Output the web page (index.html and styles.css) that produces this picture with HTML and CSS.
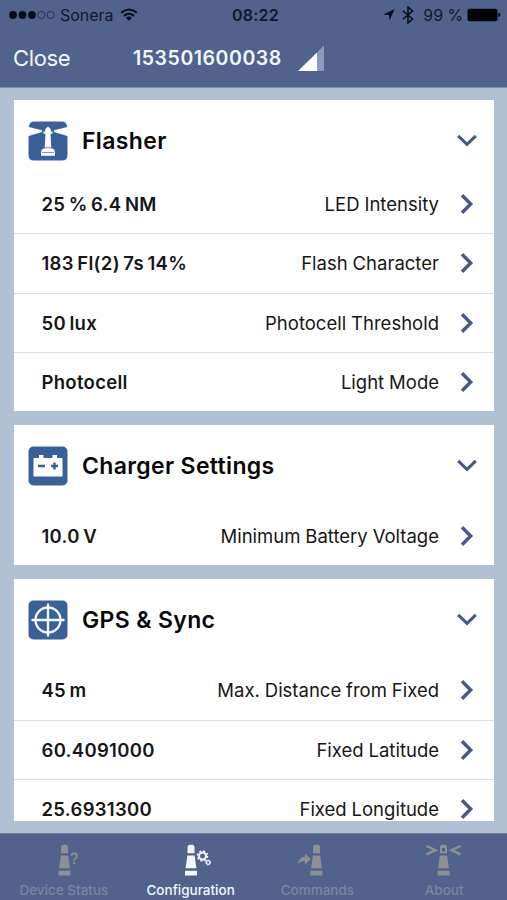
FILE: index.html
```html
<!DOCTYPE html>
<html lang="en">
<head>
<meta charset="utf-8">
<title>Configuration</title>
<link rel="stylesheet" href="styles.css">
</head>
<body>
<svg class="defs" aria-hidden="true">
  <symbol id="right" viewBox="0 0 14 20"><path d="M2 1.300 10.700 10 2 18.700" fill="none" stroke="currentColor" stroke-width="3.400"/></symbol>
  <symbol id="down" viewBox="0 0 20 13"><path d="M1.200 1.800 10 10.300 18.800 1.800" fill="none" stroke="currentColor" stroke-width="3"/></symbol>
  <symbol id="tower" viewBox="0 0 13 32"><path d="M3 9.300V3.600Q3.200.8 5.500.8H7.500Q9.800.8 10 3.600V9.300ZM2.900 11.500H10.100L11.900 24.300H1.100ZM.5 26.700H12.500V31.600H.5Z" fill="currentColor"/></symbol>
</svg>
<header class="top">
  <div class="status">
    <div class="status-left">
      <svg width="48" height="10" viewBox="0 0 48 10"><g fill="#060b1c"><circle cx="5" cy="5" r="3.900"/><circle cx="14.500" cy="5" r="3.900"/><circle cx="24" cy="5" r="3.900"/></g><g fill="none" stroke="#1a2545" stroke-width=".8"><circle cx="33.300" cy="5" r="3.600"/><circle cx="42.700" cy="5" r="3.600"/></g></svg>
      <span class="carrier">Sonera</span>
      <svg class="wifi" width="18" height="13" viewBox="0 0 18 13"><g fill="none" stroke="#060b1c" stroke-width="2"><path d="M1.200 4.800Q9-1.900 16.800 4.800"/><path d="M4 8Q9 3.600 14 8"/></g><path d="M6 9.800Q9 7.200 12 9.800L9 12.700Z" fill="#060b1c"/></svg>
    </div>
    <span class="clock">08:22</span>
    <div class="status-right">
      <svg width="12" height="12" viewBox="0 0 12 12"><path d="M11.500.3 6.500 11.600 6 6 .3 5.600Z" fill="#060b1c"/></svg>
      <svg class="bt" width="12" height="18" viewBox="0 0 12 18"><path d="M1 4.800 10.500 13 6 17V1L10.500 5 1 13.200" fill="none" stroke="#060b1c" stroke-width="1.500"/></svg>
      <span class="percent">99 %</span>
      <svg class="cell" width="34" height="14" viewBox="0 0 34 14"><rect x=".5" y=".8" width="30" height="12.400" rx="2" fill="#02040a"/><path d="M31.300 4.800Q33.500 5.200 33.500 7T31.300 9.200Z" fill="#060b1c"/></svg>
    </div>
  </div>
  <div class="nav">
    <span class="close">Close</span>
    <span class="serial">153501600038</span>
    <svg class="signal" width="27" height="26" viewBox="0 0 27 26"><path d="M0 26 19 7.400V26Z" fill="#fff"/><path d="M19 7.400 26 .5V26H19Z" fill="#8c9abb"/></svg>
  </div>
</header>
<main class="content">
  <section class="card flasher">
    <div class="head">
      <svg class="badge" viewBox="0 0 40 40"><path d="M.8 6Q1.500.5 6 .5H34Q38.500.5 39.200 6L26 9.300V11L39.500 15V34Q39.500 39.500 34 39.500H6Q.5 39.500.5 34V15L14 11V9.300Z" fill="#3a6099"/><path d="M20 5.500 22.800 8.300V10.500H24.500V12.800H22.500L23.300 26.500H16.700L17.500 12.800H15.500V10.500H17.200V8.300Z" fill="#fff"/><path d="M16 27.300H24Q27 28.500 27 31V34.800H13V31Q13 28.500 16 27.300Z" fill="#fff"/><path d="M14 31.500H26" stroke="#3a6099" stroke-width=".7"/></svg>
      <h2>Flasher</h2><svg class="down"><use href="#down"/></svg>
    </div>
    <div class="row"><b>25 % 6.4 NM</b><span>LED Intensity</span><svg class="right"><use href="#right"/></svg></div>
    <div class="row"><b>183 Fl(2) 7s 14%</b><span>Flash Character</span><svg class="right"><use href="#right"/></svg></div>
    <div class="row"><b>50 lux</b><span>Photocell Threshold</span><svg class="right"><use href="#right"/></svg></div>
    <div class="row"><b>Photocell</b><span>Light Mode</span><svg class="right"><use href="#right"/></svg></div>
  </section>
  <section class="card">
    <div class="head">
      <svg class="badge" viewBox="0 0 40 40"><rect x=".5" y=".5" width="39" height="39" rx="5" fill="#3a6099"/><path d="M5.500 12H11V9H15.500V12H24.500V9H29V12H34.500V30.500H5.500Z" fill="#fff"/><path d="M10 20H17M23 20H30M26.500 16.500V23.500" stroke="#3a6099" stroke-width="2.400"/></svg>
      <h2>Charger Settings</h2><svg class="down"><use href="#down"/></svg>
    </div>
    <div class="row"><b>10.0 V</b><span>Minimum Battery Voltage</span><svg class="right"><use href="#right"/></svg></div>
  </section>
  <section class="card">
    <div class="head">
      <svg class="badge" viewBox="0 0 40 40"><rect x=".5" y=".5" width="39" height="39" rx="5" fill="#3a6099"/><g fill="none" stroke="#f4f8ff" stroke-width="2.300"><circle cx="20" cy="20" r="12.500"/><path d="M20 3.500V36.500M3.500 20H36.500"/></g></svg>
      <h2>GPS &amp; Sync</h2><svg class="down"><use href="#down"/></svg>
    </div>
    <div class="row"><b>45 m</b><span>Max. Distance from Fixed</span><svg class="right"><use href="#right"/></svg></div>
    <div class="row"><b>60.4091000</b><span>Fixed Latitude</span><svg class="right"><use href="#right"/></svg></div>
    <div class="row"><b>25.6931300</b><span>Fixed Longitude</span><svg class="right"><use href="#right"/></svg></div>
  </section>
</main>
<nav class="tabs">
  <div class="tab">
    <svg width="48" height="32" viewBox="0 0 48 32"><use href="#tower" x="18" width="13" height="32"/><path d="M31.400 11.800Q31.600 9.300 34.200 9.300T37 11.800Q37 13.400 35.400 14.400T34.200 17" fill="none" stroke="currentColor" stroke-width="1.700"/><circle cx="34.200" cy="19.200" r="1.100" fill="currentColor"/></svg>
    <span>Device Status</span>
  </div>
  <div class="tab active">
    <svg width="48" height="32" viewBox="0 0 48 32"><use href="#tower" x="17.500" width="13" height="32"/><g fill="none" stroke="currentColor"><circle cx="35.500" cy="12" r="3.500" stroke-width="2"/><circle cx="35.500" cy="12" r="5.100" stroke-width="1.400" stroke-dasharray="2.003 2.003"/><circle cx="41.200" cy="18.500" r="1.800" stroke-width="1.300"/><circle cx="41.200" cy="18.500" r="2.600" stroke-width=".7" stroke-dasharray="1.021 1.021"/></g></svg>
    <span>Configuration</span>
  </div>
  <div class="tab">
    <svg width="48" height="32" viewBox="0 0 48 32"><use href="#tower" x="17" width="13" height="32"/><path d="M4.500 19.500Q7 13 12 12.800V9.800L17.800 15 12 20.500V17Q8 16.600 4.500 19.500Z" fill="currentColor"/></svg>
    <span>Commands</span>
  </div>
  <div class="tab">
    <svg width="48" height="32" viewBox="0 0 48 32"><use href="#tower" x="17" width="13" height="32"/><rect x="22" y="4" width="3" height="3.500" fill="#51638c"/><path d="M6.500 2 15.500 6.200 6.500 10.400M40.500 2 31.500 6.200 40.500 10.400" fill="none" stroke="currentColor" stroke-width="2.400"/></svg>
    <span>About</span>
  </div>
</nav>
</body>
</html>
```
FILE: styles.css
```css
* { box-sizing: border-box; }
body {
  margin: 0;
  width: 507px;
  height: 900px;
  display: flex;
  flex-direction: column;
  overflow: hidden;
  background: #b1c0d2;
  font-family: Inter, sans-serif;
  color: #161618;
}
svg { display: block; flex: none; }
.defs { position: absolute; width: 0; height: 0; }
.top { flex: none; height: 88px; background: #51638c; border-bottom: 1px solid #7b8baa; }
.status {
  height: 29px;
  display: grid;
  grid-template-columns: 1fr auto 1fr;
  align-items: center;
  padding: 0 6px 0 8px;
  font-size: 16px;
  color: #10182f;
}
.status-left, .status-right { display: flex; align-items: center; }
.status-right { justify-content: flex-end; }
.carrier { margin-left: 4px; letter-spacing: -0.05px; }
.wifi { margin-left: 7px; }
.clock { font-weight: 600; letter-spacing: 0.2px; padding-left: 2px; }
.bt { margin-left: 7px; }
.percent { margin-left: 9px; letter-spacing: -0.1px; }
.cell { margin-left: 4px; }
.nav { height: 58px; display: flex; align-items: center; padding-left: 13px; color: #f2f6ff; }
.close { width: 120px; font-size: 22px; letter-spacing: -0.35px; }
.serial { width: 165px; font-size: 19.500px; font-weight: 600; letter-spacing: 0.55px; }
.content {
  flex: none;
  height: 733px;
  padding: 12px 13px 0 14px;
  overflow: hidden;
  display: flex;
  flex-direction: column;
  gap: 14px;
}
.card { flex: none; background: #fff; }
.head { height: 81px; padding: 21px 17px 0 14px; display: flex; align-items: flex-start; }
.flasher .head { height: 74px; }
.badge { width: 40px; height: 40px; }
h2 { flex: 1; margin: 0 0 0 14px; font-size: 23px; line-height: 40px; font-weight: 600; letter-spacing: 0.35px; color: #08080a; }
.down { width: 20px; height: 13px; margin-top: 13px; color: #465788; }
.row { height: 59.250px; display: flex; align-items: center; padding: 0 20px 0 27.500px; font-size: 18.500px; }
.row + .row { border-top: 1px solid #dddee4; }
.row b { flex: 1; font-weight: 600; letter-spacing: 0.3px; word-spacing: -1.500px; }
.row span { word-spacing: -0.3px; }
.right { width: 14px; height: 20px; margin-left: 21px; color: #465788; }
.tabs { margin-top: auto; height: 67px; display: flex; background: #51638c; border-top: 1px solid #6c7c9f; }
.tab { flex: 1; display: flex; flex-direction: column; align-items: center; padding: 10px 0 0 1px; color: #8f9097; }
.tab span { margin-top: 5px; font-size: 13.500px; line-height: 18px; font-weight: 500; color: #7a86a2; }
.tab.active, .tab.active span { color: #f4f7ff; }
```
